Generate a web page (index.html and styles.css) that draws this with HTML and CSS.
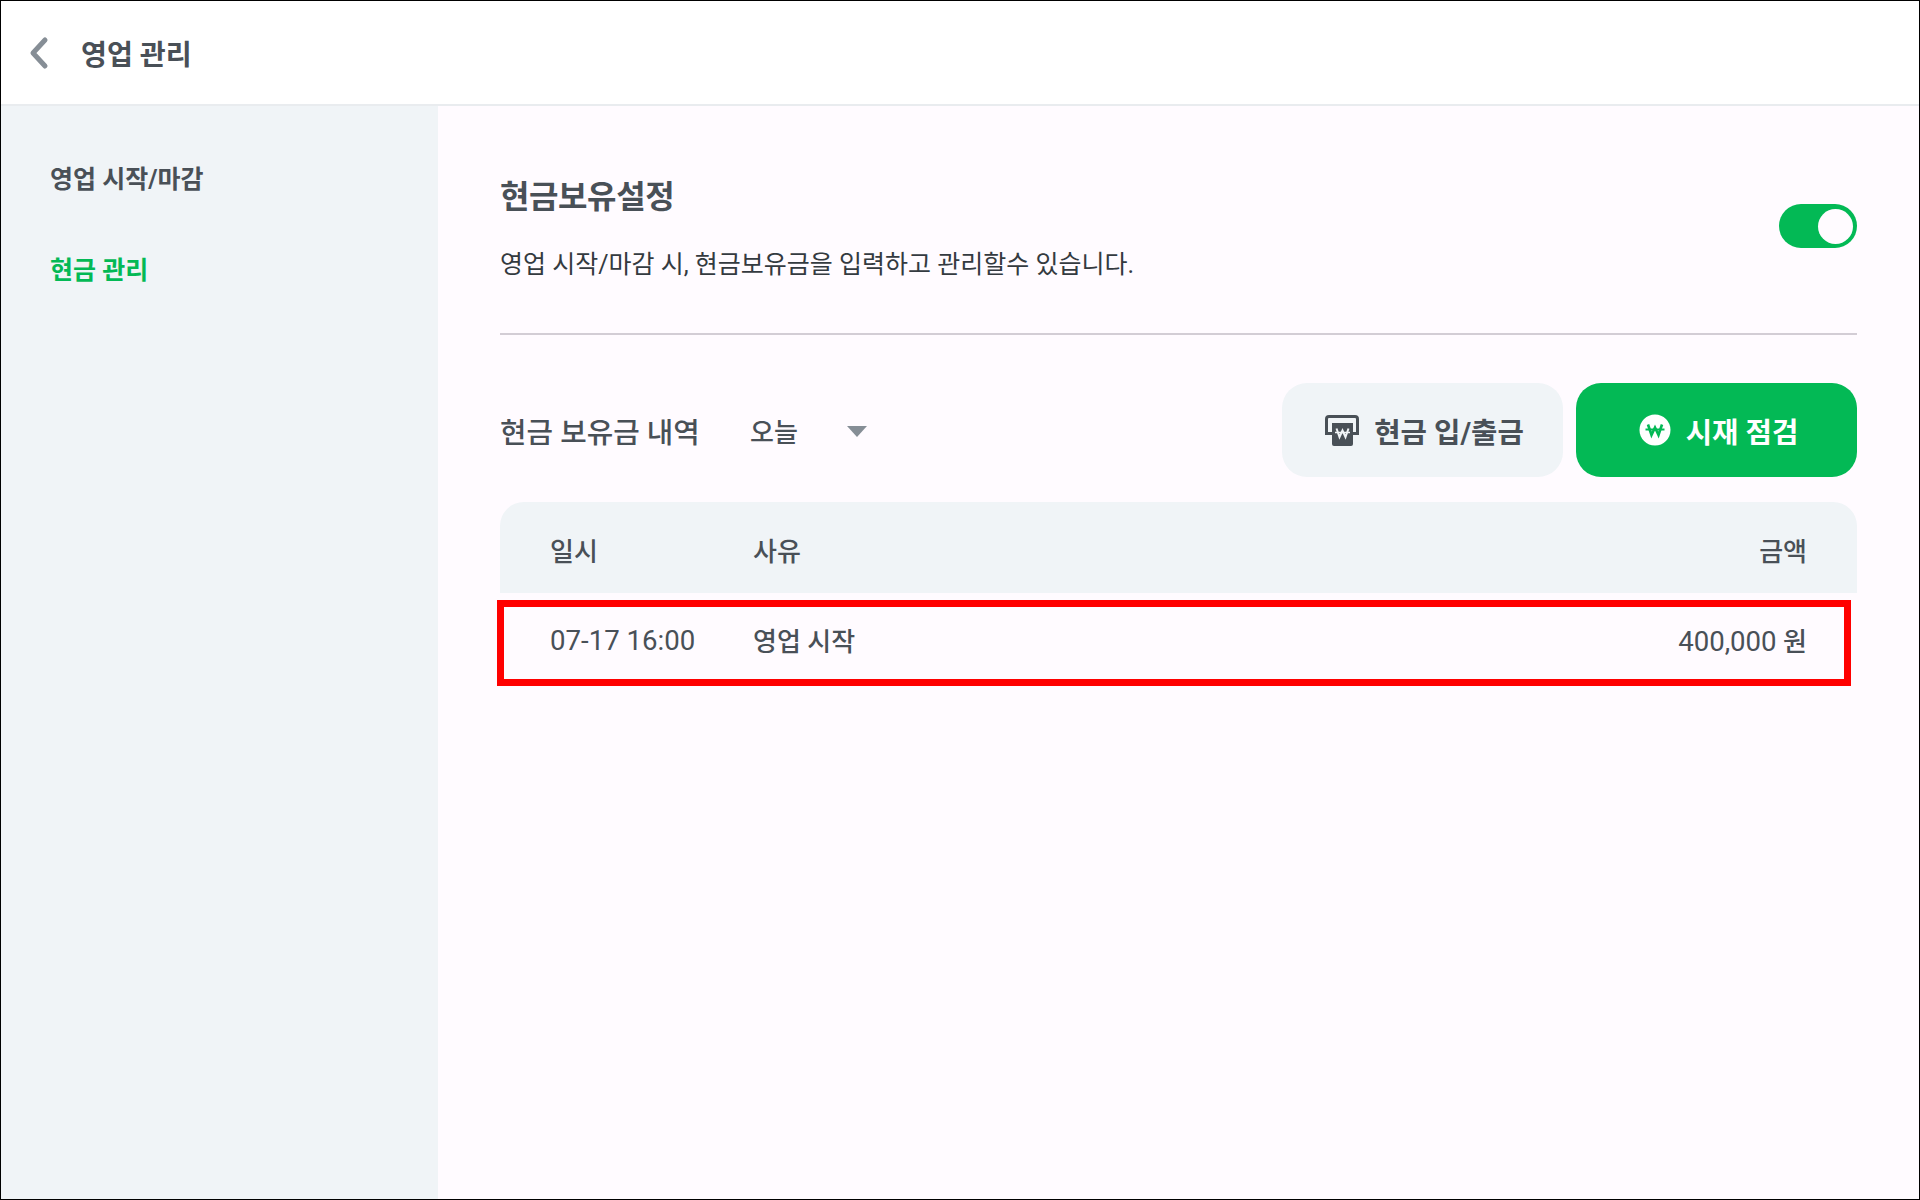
FILE: index.html
```html
<!DOCTYPE html>
<html lang="ko">
<head>
  <meta charset="UTF-8">
  <title>영업 관리</title>
  <link rel="stylesheet" href="styles.css">
</head>
<body>
  <div class="app">
    <header class="topbar">
      <svg class="back-icon" width="22" height="34" viewBox="0 0 22 34">
        <polyline points="17,4 5,17 17,30" fill="none" stroke="#868e96" stroke-width="5" stroke-linecap="round" stroke-linejoin="round"/>
      </svg>
      <h1>영업 관리</h1>
    </header>

    <div class="layout">
      <nav class="sidebar">
        <a class="nav-item">영업 시작/마감</a>
        <a class="nav-item active">현금 관리</a>
      </nav>

      <main class="content">
        <section class="setting">
          <div>
            <h2>현금보유설정</h2>
            <p>영업 시작/마감 시, 현금보유금을 입력하고 관리할수 있습니다.</p>
          </div>
          <div class="toggle"><span class="knob"></span></div>
        </section>

        <section class="toolbar">
          <span class="toolbar-title">현금 보유금 내역</span>
          <div class="period">
            <span>오늘</span>
            <span class="caret"></span>
          </div>
          <div class="actions">
            <button class="btn">
              <svg width="34" height="31" viewBox="0 0 34 31">
                <path d="M0 20V4a4 4 0 0 1 4-4h26a4 4 0 0 1 4 4v16h-7v-3h4V4a1 1 0 0 0-1-1H4a1 1 0 0 0-1 1v13h4v3z" fill="#495057"/>
                <path d="M7 8h21v21a2 2 0 0 1-2 2H9a2 2 0 0 1-2-2z" fill="#495057"/>
                <polyline points="11.5,13.5 14.5,22 17.5,15.5 20.5,22 23.5,13.5" fill="none" stroke="#f0f4f7" stroke-width="2"/>
                <line x1="10" y1="17.5" x2="25" y2="17.5" stroke="#f0f4f7" stroke-width="1.5"/>
              </svg>
              현금 입/출금
            </button>
            <button class="btn btn-green">
              <svg width="32" height="32" viewBox="0 0 32 32">
                <circle cx="16" cy="16" r="15.5" fill="#fff"/>
                <polyline points="9,10.5 12.5,21 16,13.5 19.5,21 23,10.5" fill="none" stroke="#03b955" stroke-width="2.6"/>
                <line x1="6.5" y1="15.5" x2="25.5" y2="15.5" stroke="#03b955" stroke-width="2"/>
              </svg>
              시재 점검
            </button>
          </div>
        </section>

        <div class="table">
          <div class="row head">
            <span class="col-date">일시</span>
            <span class="col-reason">사유</span>
            <span class="col-amount">금액</span>
          </div>
          <div class="row">
            <span class="col-date num date-cell">07-17 16:00</span>
            <span class="col-reason">영업 시작</span>
            <span class="col-amount"><span class="num">400,000</span> 원</span>
          </div>
          <div class="highlight"></div>
        </div>
      </main>
    </div>
  </div>
</body>
</html>
```

FILE: styles.css
```css
* {
  box-sizing: border-box;
}

body {
  margin: 0;
  font-family: Roboto, "Noto Sans CJK KR", sans-serif;
  color: #495057;
}

.app {
  height: 1200px;
  border: 1px solid #000;
  display: flex;
  flex-direction: column;
  background: #fffbff;
}

.topbar {
  height: 105px;
  flex-shrink: 0;
  display: flex;
  align-items: center;
  padding-left: 27px;
  background: #fff;
  border-bottom: 2px solid #e9ecef;
}

.topbar h1 {
  margin: 0 0 0 31px;
  font-size: 28.2px;
  font-weight: 700;
}

.layout {
  flex: 1;
  display: flex;
}

.sidebar {
  width: 437px;
  background: #f0f4f7;
  padding: 56px 0 0 49px;
}

.nav-item {
  display: block;
  height: 91px;
  line-height: 36px;
  font-size: 25px;
  font-weight: 700;
}

.nav-item.active {
  color: #03b955;
}

.content {
  flex: 1;
  padding: 68px 62px 0;
}

.setting {
  height: 161px;
  display: flex;
  justify-content: space-between;
  align-items: flex-start;
  border-bottom: 2px solid #d3cdd5;
}

.setting h2 {
  margin: 0;
  font-size: 32px;
  font-weight: 700;
  line-height: 46px;
  letter-spacing: -0.4px;
}

.setting p {
  margin: 26px 0 0;
  font-size: 25px;
  line-height: 38px;
  color: #343a40;
}

.toggle {
  width: 78px;
  height: 44px;
  margin-top: 30px;
  border-radius: 22px;
  background: #03b955;
  display: flex;
  align-items: center;
  justify-content: flex-end;
  padding-right: 4px;
}

.knob {
  width: 35px;
  height: 35px;
  border-radius: 50%;
  background: #fffbff;
}

.toolbar {
  display: flex;
  align-items: center;
  margin-top: 48px;
}

.toolbar-title {
  width: 250px;
  font-size: 28.8px;
  font-weight: 500;
}

.period {
  display: flex;
  align-items: center;
  gap: 49px;
  font-size: 26px;
  font-weight: 500;
}

.caret {
  margin-top: 2px;
  border-left: 10px solid transparent;
  border-right: 10px solid transparent;
  border-top: 11px solid #868e96;
}

.actions {
  margin-left: auto;
  display: flex;
  gap: 13px;
}

.btn {
  width: 281px;
  height: 94px;
  padding: 0 0 0 4px;
  border: none;
  border-radius: 25px;
  background: #f0f4f7;
  color: #495057;
  font-family: inherit;
  font-size: 28.7px;
  font-weight: 700;
  display: flex;
  align-items: center;
  justify-content: center;
  gap: 15px;
}

.btn-green {
  background: #03b955;
  color: #fff;
}

.table {
  position: relative;
  margin-top: 25px;
}

.row {
  height: 91px;
  display: flex;
  align-items: center;
  padding: 2px 50px 0;
  font-size: 26px;
  font-weight: 500;
}

.row.head {
  padding-top: 4px;
  background: #f0f4f7;
  border-radius: 24px 24px 0 0;
}

.num {
  font-size: 27.6px;
  font-weight: 400;
}

.date-cell {
  padding-top: 2px;
}

.col-date {
  width: 203px;
}

.col-amount {
  margin-left: auto;
}

.highlight {
  position: absolute;
  left: -3px;
  top: 98px;
  width: 1354px;
  height: 86px;
  border: 7px solid #f00;
}
```
